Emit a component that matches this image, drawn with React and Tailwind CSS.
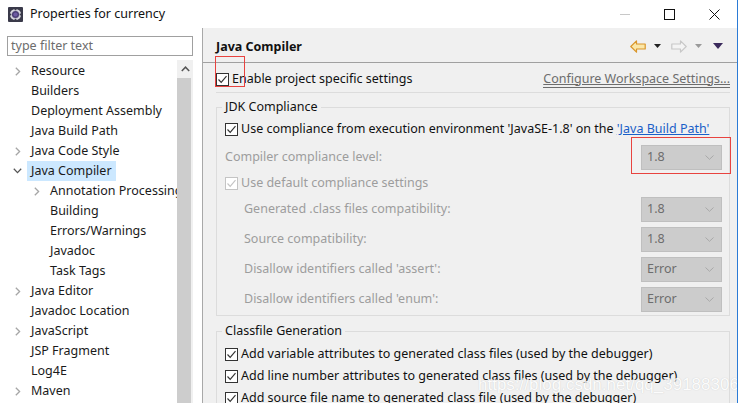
import React from "react";

const FONT = { fontFamily: '"Noto Sans", "Open Sans", sans-serif' };

function Check({ disabled = false }) {
  return (
    <span
      className={
        "inline-flex items-center justify-center w-[13px] h-[13px] shrink-0 border bg-white " +
        (disabled ? "border-[#c4c4c4]" : "border-[#333333]")
      }
    >
      <svg width="11" height="11" viewBox="0 0 11 11">
        <path
          d="M1.5 5.5 L4.2 8.3 L9.5 2.2"
          fill="none"
          stroke={disabled ? "#c4c4c4" : "#333333"}
          strokeWidth="1.2"
        />
      </svg>
    </span>
  );
}

function Chevron({ open = false }) {
  return open ? (
    <svg width="9" height="6" viewBox="0 0 9 6">
      <path d="M0.8 0.8 L4.5 4.6 L8.2 0.8" fill="none" stroke="#555555" strokeWidth="1.3" />
    </svg>
  ) : (
    <svg width="6" height="9" viewBox="0 0 6 9">
      <path d="M0.8 0.8 L4.6 4.5 L0.8 8.2" fill="none" stroke="#a6a6a6" strokeWidth="1.3" />
    </svg>
  );
}

function TreeRow({ label, level = 0, expand = null, selected = false }) {
  return (
    <div className="flex items-center h-[20px] whitespace-nowrap" style={{ paddingLeft: 12 + level * 19 }}>
      <span className="w-[15px] shrink-0 flex items-center justify-start pl-[3px]">
        {expand === "closed" && <Chevron />}
        {expand === "open" && <span className="-ml-[2px] flex"><Chevron open /></span>}
      </span>
      <span className={"px-[4px] h-[20px] flex items-center text-[12.5px] text-[#1a1a1a] " + (selected ? "bg-[#cce8ff]" : "")}>
        {label}
      </span>
    </div>
  );
}

function Select({ value }) {
  return (
    <div className="w-[81px] h-[25px] bg-[#cccccc] border border-[#bfbfbf] flex items-center justify-between pl-[5px] pr-[7px] text-[12.5px] text-[#6d6d6d]">
      <span>{value}</span>
      <svg width="9" height="5" viewBox="0 0 9 5">
        <path d="M0.5 0.5 L4.5 4.3 L8.5 0.5" fill="none" stroke="#a8a8a8" strokeWidth="1" />
      </svg>
    </div>
  );
}

function SubRow({ label, value, mt }) {
  return (
    <div className={"flex items-center justify-between h-[26px] pl-[19px] " + mt}>
      <span className="text-[12.5px] text-[#9d9d9d]">{label}</span>
      <Select value={value} />
    </div>
  );
}

export default function App() {
  const tree = [
    { label: "Resource", expand: "closed" },
    { label: "Builders" },
    { label: "Deployment Assembly" },
    { label: "Java Build Path" },
    { label: "Java Code Style", expand: "closed" },
    { label: "Java Compiler", expand: "open", selected: true },
    { label: "Annotation Processing", level: 1, expand: "closed" },
    { label: "Building", level: 1 },
    { label: "Errors/Warnings", level: 1 },
    { label: "Javadoc", level: 1 },
    { label: "Task Tags", level: 1 },
    { label: "Java Editor", expand: "closed" },
    { label: "Javadoc Location" },
    { label: "JavaScript", expand: "closed" },
    { label: "JSP Fragment" },
    { label: "Log4E" },
    { label: "Maven", expand: "closed" },
  ];

  return (
    <div className="relative w-[738px] h-[403px] overflow-hidden bg-white flex flex-col border-r border-[#2b7bd6]" style={FONT}>
      {/* Title bar */}
      <div className="h-[28px] shrink-0 flex items-center">
        <div className="w-[30px] flex justify-center">
          <svg width="15" height="15" viewBox="0 0 16 16">
            <rect x="0" y="0" width="16" height="16" fill="#3a3a4a" rx="1" />
            <circle cx="8" cy="8" r="6" fill="#d6d6de" />
            <g fill="#3a3a4a">
              <rect x="7" y="1" width="2" height="2.5" />
              <rect x="7" y="12.5" width="2" height="2.5" />
              <rect x="1" y="7" width="2.5" height="2" />
              <rect x="12.5" y="7" width="2.5" height="2" />
            </g>
            <circle cx="8" cy="8" r="3.8" fill="#4b3f75" />
            <circle cx="8" cy="8" r="2.2" fill="#6d5ba3" />
          </svg>
        </div>
        <span className="text-[12.5px] text-[#111]">Properties for currency</span>
        <div className="ml-auto flex items-center h-full">
          <div className="w-[45px] h-full flex items-center justify-center">
            <div className="w-[10px] h-px bg-[#c8c8c8]" />
          </div>
          <div className="w-[45px] h-full flex items-center justify-center">
            <div className="w-[11px] h-[11px] border border-[#111]" />
          </div>
          <div className="w-[45px] h-full flex items-center justify-center">
            <svg width="11" height="11" viewBox="0 0 11 11">
              <path d="M0.5 0.5 L10.5 10.5 M10.5 0.5 L0.5 10.5" stroke="#111" strokeWidth="1" />
            </svg>
          </div>
        </div>
      </div>

      {/* Body */}
      <div className="flex flex-1 min-h-0">
        {/* Left */}
        <div className="w-[203px] shrink-0 bg-white flex flex-col border-r border-[#a8a8a8]">
          <div className="pt-[8px] pl-[7px]">
            <div className="w-[186px] h-[20px] border border-[#a0a0a0] flex items-center pl-[3px] text-[12.5px] text-[#6d6d6d]">
              type filter text
            </div>
          </div>
          <div className="flex flex-1 min-h-0 mt-[4px]">
            <div className="w-[177px] overflow-hidden pt-[1px]">
              {tree.map((t) => (
                <TreeRow key={t.label} {...t} />
              ))}
            </div>
            <div className="w-[16px] bg-[#f0f0f0] flex flex-col">
              <div className="h-[18px] flex items-center justify-center">
                <svg width="9" height="6" viewBox="0 0 9 6">
                  <path d="M0.8 5 L4.5 1.2 L8.2 5" fill="none" stroke="#555" strokeWidth="1.5" />
                </svg>
              </div>
              <div className="flex-1 w-[14px] bg-[#cdcdcd]" />
            </div>
          </div>
        </div>

        {/* Right */}
        <div className="flex-1 bg-[#f0f0f0] flex flex-col min-w-0">
          <div className="h-[35px] shrink-0 border-b border-[#a0a0a0] flex items-center pl-[13px] pr-[14px] pt-[4px]">
            <span className="text-[12.5px] font-bold text-[#111]">Java Compiler</span>
            <div className="ml-auto flex items-center -mt-[2px]">
              <svg width="16" height="13" viewBox="0 0 16 13">
                <path d="M0.8 6.5 L6.5 0.8 L6.5 4 L15.2 4 L15.2 9 L6.5 9 L6.5 12.2 Z" fill="#fbe7a8" stroke="#d9962b" strokeWidth="1.2" strokeLinejoin="round" />
              </svg>
              <svg className="ml-[8px]" width="7" height="4" viewBox="0 0 7 4"><path d="M0 0 L7 0 L3.5 4 Z" fill="#222" /></svg>
              <svg className="ml-[10px]" width="16" height="13" viewBox="0 0 16 13">
                <path d="M15.2 6.5 L9.5 0.8 L9.5 4 L0.8 4 L0.8 9 L9.5 9 L9.5 12.2 Z" fill="#f4f4f4" stroke="#c8c8c8" strokeWidth="1.2" strokeLinejoin="round" />
              </svg>
              <svg className="ml-[8px]" width="7" height="4" viewBox="0 0 7 4"><path d="M0 0 L7 0 L3.5 4 Z" fill="#9a9a9a" /></svg>
              <svg className="ml-[11px]" width="10" height="6" viewBox="0 0 10 6"><path d="M0 0 L10 0 L5 6 Z" fill="#3b2a5c" /></svg>
            </div>
          </div>

          <div className="pl-[13px] pr-[7px]">
            <div className="h-[30px] pt-[3px] flex items-center border-b border-[#dcdcdc]">
              <div className="relative flex items-center">
                <Check />
                <div className="absolute left-[-1px] top-[-17px] w-[30px] h-[31px] border border-[#e8433f]" />
              </div>
              <span className="ml-[3px] text-[12.5px] text-[#111]">Enable project specific settings</span>
              <span className="ml-auto text-[12.5px] text-[#6d6d6d] underline border-b border-[#6d6d6d] leading-[16px]">
                Configure Workspace Settings...
              </span>
            </div>

            <fieldset className="mt-[5px] border border-[#dcdcdc] pl-[8px] pr-[7px] pb-[3px]">
              <legend className="-ml-[3px] px-[3px] h-[18px] text-[12.5px] text-[#111] leading-[18px]">JDK Compliance</legend>
              <div className="h-[22px] mt-[2px] flex items-center">
                <Check />
                <span className="ml-[3px] text-[12.5px] text-[#111] whitespace-nowrap">
                  Use compliance from execution environment 'JavaSE-1.8' on the{" "}
                  <span className="text-[#1a5fc8] underline">'Java Build Path'</span>
                </span>
              </div>
              <div className="h-[26px] mt-[4px] flex items-center justify-between">
                <span className="text-[12.5px] text-[#9d9d9d]">Compiler compliance level:</span>
                <div className="relative">
                  <Select value="1.8" />
                  <div className="absolute left-[-10px] top-[-8px] w-[100px] h-[37px] border border-[#e8433f]" />
                </div>
              </div>
              <div className="h-[22px] mt-[2px] flex items-center">
                <Check disabled />
                <span className="ml-[3px] text-[12.5px] text-[#9d9d9d]">Use default compliance settings</span>
              </div>
              <SubRow label="Generated .class files compatibility:" value="1.8" mt="mt-[2px]" />
              <SubRow label="Source compatibility:" value="1.8" mt="mt-[4px]" />
              <SubRow label="Disallow identifiers called 'assert':" value="Error" mt="mt-[4px]" />
              <SubRow label="Disallow identifiers called 'enum':" value="Error" mt="mt-[4px]" />
            </fieldset>

            <fieldset className="mt-[6px] border border-[#dcdcdc] pl-[8px] pr-[7px]">
              <legend className="-ml-[3px] px-[3px] h-[18px] text-[12.5px] text-[#111] leading-[18px]">Classfile Generation</legend>
              {[
                "Add variable attributes to generated class files (used by the debugger)",
                "Add line number attributes to generated class files (used by the debugger)",
                "Add source file name to generated class file (used by the debugger)",
              ].map((t, i) => (
                <div key={t} className={"h-[22px] flex items-center " + (i === 0 ? "mt-[3px]" : "")}>
                  <Check />
                  <span className="ml-[3px] text-[12.5px] text-[#111] whitespace-nowrap">{t}</span>
                </div>
              ))}
            </fieldset>
          </div>
        </div>
      </div>

      <div
        className="absolute left-[478px] top-[372px] text-[17px] text-[#ffffff] opacity-80 whitespace-nowrap pointer-events-none"
        style={{ fontFamily: '"Liberation Sans", sans-serif', textShadow: "0 0 1px #bdbdbd" }}
      >
        https://blog.csdn.net/qq_39188306
      </div>
    </div>
  );
}
